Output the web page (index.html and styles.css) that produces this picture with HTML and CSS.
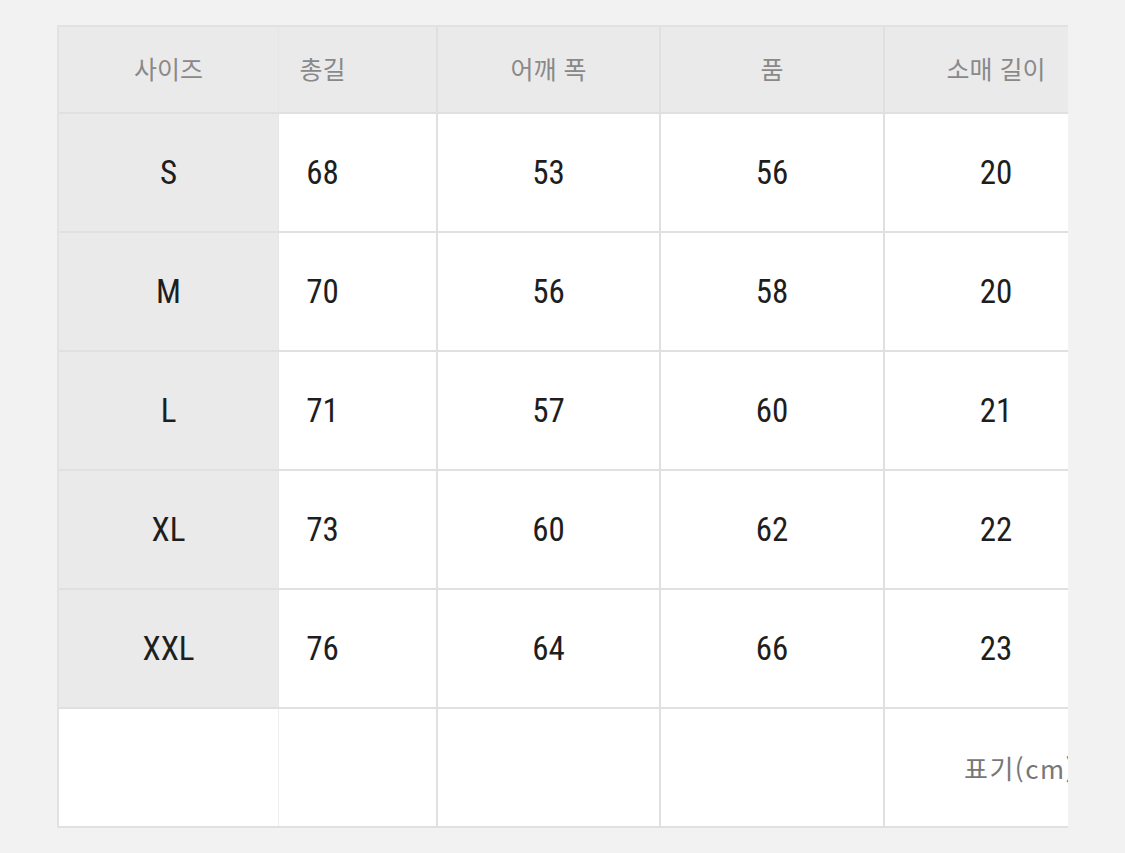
FILE: index.html
```html
<!DOCTYPE html>
<html lang="ko">
<head>
<meta charset="utf-8">
<title>사이즈 표</title>
<link rel="stylesheet" href="styles.css">
</head>
<body>
<div class="frame">
  <div class="table">
    <div class="row head">
      <div class="cell c1">사이즈</div>
      <div class="cell c2">총길</div>
      <div class="cell c3">어깨 폭</div>
      <div class="cell c4">품</div>
      <div class="cell c5">소매 길이</div>
    </div>
    <div class="row">
      <div class="cell c1 size">S</div>
      <div class="cell c2 num">68</div>
      <div class="cell c3 num">53</div>
      <div class="cell c4 num">56</div>
      <div class="cell c5 num">20</div>
    </div>
    <div class="row">
      <div class="cell c1 size">M</div>
      <div class="cell c2 num">70</div>
      <div class="cell c3 num">56</div>
      <div class="cell c4 num">58</div>
      <div class="cell c5 num">20</div>
    </div>
    <div class="row">
      <div class="cell c1 size">L</div>
      <div class="cell c2 num">71</div>
      <div class="cell c3 num">57</div>
      <div class="cell c4 num">60</div>
      <div class="cell c5 num">21</div>
    </div>
    <div class="row">
      <div class="cell c1 size">XL</div>
      <div class="cell c2 num">73</div>
      <div class="cell c3 num">60</div>
      <div class="cell c4 num">62</div>
      <div class="cell c5 num">22</div>
    </div>
    <div class="row">
      <div class="cell c1 size">XXL</div>
      <div class="cell c2 num">76</div>
      <div class="cell c3 num">64</div>
      <div class="cell c4 num">66</div>
      <div class="cell c5 num">23</div>
    </div>
    <div class="row foot">
      <div class="cell c1"></div>
      <div class="cell c2"></div>
      <div class="cell c3"></div>
      <div class="cell c4"></div>
      <div class="cell c5 note">표기(cm)</div>
    </div>
  </div>
</div>
</body>
</html>
```

FILE: styles.css
```css
html, body {
  margin: 0;
  padding: 0;
  background: #f3f2f2;
}

body {
  padding: 25px 0 0 57px;
  font-family: "Noto Sans CJK KR", "Noto Sans", sans-serif;
}

.frame {
  width: 1011px;
  height: 804px;
  overflow: hidden;
}

.table {
  width: 1060px;
  border-top: 2px solid #e2e2e2;
  border-left: 2px solid #e2e2e2;
  background: #fff;
}

.row {
  display: grid;
  grid-template-columns: 220px 159px 223px 224px 222px;
  height: 119px;
  border-bottom: 2px solid #e0e0e0;
  box-sizing: border-box;
}

.row.head {
  height: 87px;
  background: #ebeaea;
}

.cell {
  display: flex;
  align-items: center;
  justify-content: center;
  box-sizing: border-box;
  border-right: 2px solid #e0e0e0;
  white-space: nowrap;
}

.cell.c1 {
  border-right: 1px solid #e6e6e6;
  background: #ebeaea;
}

.foot .cell.c1 {
  background: #fff;
  border-right: 1px solid #efefef;
}

.cell.c2 {
  padding-right: 70px;
}

.cell.c5 {
  border-right: none;
}

.head .cell {
  font-size: 25px;
  color: #898989;
  padding-bottom: 3px;
}

.num, .size {
  font-family: "Liberation Sans Narrow", "Roboto Condensed", "DejaVu Sans Condensed", sans-serif;
  font-size: 33px;
  color: #1e1e1e;
}

.note {
  justify-content: flex-start;
  padding-left: 79px;
  font-size: 26px;
  letter-spacing: 1.5px;
  color: #777;
}
```
